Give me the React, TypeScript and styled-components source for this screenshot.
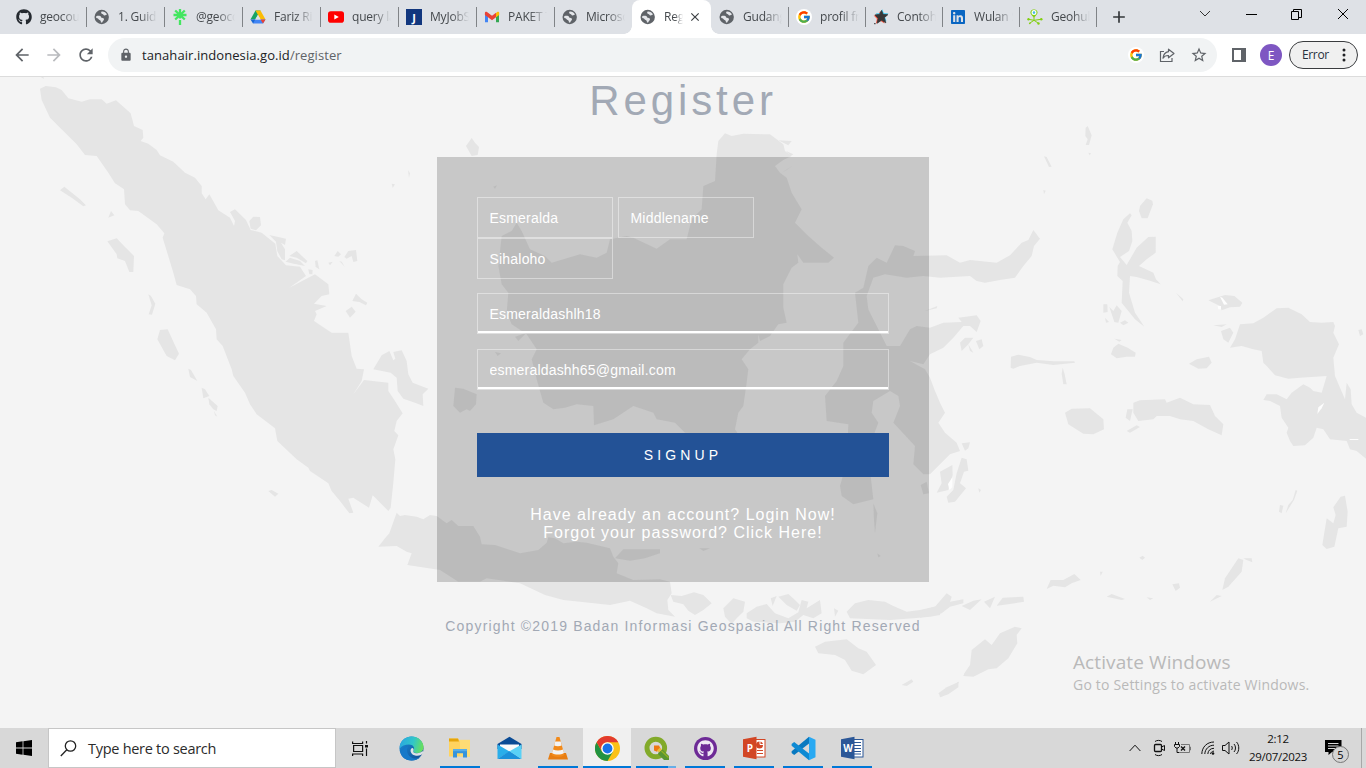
import React from 'react';
import styled, { createGlobalStyle } from 'styled-components';
import { FaGithub, FaLinkedin } from 'react-icons/fa';
import { FcGoogle } from 'react-icons/fc';
import { MdLock, MdArrowBack, MdArrowForward, MdRefresh, MdStarBorder, MdClose, MdAdd } from 'react-icons/md';

const UI = `"Open Sans", "Noto Sans", sans-serif`;
const ARIAL = `"Liberation Sans", Arial, sans-serif`;

const Global = createGlobalStyle`
  * { box-sizing: border-box; }
  html, body { margin: 0; height: 100%; overflow: hidden; }
  svg { display: block; flex: none; }
`;

const Screen = styled.div`
  display: flex;
  flex-direction: column;
  width: 1366px;
  height: 768px;
  overflow: hidden;
  font-family: ${UI};
`;

/* ---------- browser chrome ---------- */

const TabStrip = styled.div`
  display: flex;
  height: 34px;
  padding-left: 8px;
  background: #dee1e6;
`;

const TabBox = styled.div<{ $w: number; $active?: boolean; $divider?: boolean }>`
  position: relative;
  display: flex;
  align-items: center;
  gap: 8px;
  width: ${p => p.$w}px;
  height: 34px;
  padding-left: 8px;
  border-radius: 8px 8px 0 0;
  background: ${p => (p.$active ? '#fff' : 'transparent')};
  &::after {
    content: '';
    position: absolute;
    display: ${p => (p.$divider ? 'block' : 'none')};
    right: -1px;
    top: 7px;
    width: 1px;
    height: 20px;
    background: #808387;
  }
`;

const TabCurve = styled.span<{ $side: 'left' | 'right' }>`
  position: absolute;
  bottom: 0;
  ${p => p.$side}: -8px;
  width: 8px;
  height: 8px;
  background: radial-gradient(circle at ${p => (p.$side === 'left' ? '0 0' : '8px 0')}, transparent 7.5px, #fff 8px);
`;

const TabTitle = styled.span<{ $w: number }>`
  width: ${p => p.$w}px;
  overflow: hidden;
  white-space: nowrap;
  font-size: 12px;
  letter-spacing: -0.2px;
  line-height: 18px;
  color: #45494d;
  mask-image: linear-gradient(to right, #000 55%, transparent 100%);
`;

const TabClose = styled(MdClose)`
  margin-left: -3px;
  color: #3c4043;
`;

const NewTab = styled.div`
  display: flex;
  align-items: center;
  width: 74px;
  padding-left: 13px;
  color: #33373a;
`;

const WindowButtons = styled.div`
  display: flex;
  align-items: center;
  justify-content: space-between;
  width: 150px;
  height: 28px;
  margin-left: 29px;
`;

const Toolbar = styled.div`
  display: flex;
  align-items: center;
  height: 43px;
  padding: 0 8px 0 12px;
  background: #fff;
  border-bottom: 1px solid #dcdcdc;
`;

const NavButtons = styled.div`
  display: flex;
  gap: 12px;
  width: 96px;
  color: #5f6368;
`;

const Omnibox = styled.div`
  display: flex;
  align-items: center;
  width: 1109px;
  height: 34px;
  padding: 0 9px 0 11px;
  border-radius: 17px;
  background: #f1f3f4;
  color: #5f6368;
`;

const Url = styled.span`
  flex: 1;
  margin-left: 9px;
  font-size: 13px;
  letter-spacing: 0.07px;
  line-height: 20px;
  b { font-weight: 400; color: #202124; }
`;

const OmniIcons = styled.div`
  display: flex;
  align-items: center;
  gap: 14px;
`;

const SidePanelIcon = styled.svg`
  margin-left: 15px;
`;

const GoogleDisc = styled.span<{ $s: number }>`
  display: flex;
  align-items: center;
  justify-content: center;
  width: ${p => p.$s}px;
  height: ${p => p.$s}px;
  border-radius: 50%;
  background: #fff;
`;

const Avatar = styled.div`
  display: flex;
  align-items: center;
  justify-content: center;
  width: 22px;
  height: 22px;
  margin: 0 7px 0 14px;
  border-radius: 50%;
  background: #7e57c2;
  color: #fff;
  font-size: 12px;
`;

const ErrorPill = styled.div`
  display: flex;
  align-items: center;
  justify-content: space-between;
  width: 69px;
  height: 28px;
  padding: 0 11px 1px 12px;
  border: 1px solid #3a3c3f;
  border-radius: 14px;
  background: #f0f0f0;
  color: #27313d;
  font-size: 12px;
  letter-spacing: -0.35px;
`;

/* ---------- page ---------- */

const Page = styled.main`
  position: relative;
  display: flex;
  flex-direction: column;
  align-items: center;
  height: 651px;
  background: #f4f4f4;
  font-family: ${ARIAL};
  overflow: hidden;
`;

const MapLayer = styled.svg`
  position: absolute;
  inset: 0;
`;

const Heading = styled.h1`
  position: relative;
  margin: 0;
  height: 80px;
  font-size: 42px;
  font-weight: 400;
  line-height: 48px;
  letter-spacing: 3.9px;
  color: #a2a9b5;
`;

const Panel = styled.form`
  position: relative;
  width: 492px;
  height: 425px;
  padding: 40px;
  background: rgba(0, 0, 0, 0.18);
`;

const NameFields = styled.div`
  display: flex;
  flex-wrap: wrap;
  column-gap: 5px;
  width: 290px;
  margin-bottom: 14px;
`;

const Field = styled.input<{ $w: number; $underline?: boolean }>`
  display: block;
  width: ${p => p.$w}px;
  height: 41px;
  margin: 0 0 ${p => (p.$underline ? 15 : 0)}px;
  padding: 0 11.5px;
  border: 1px solid rgba(255, 255, 255, 0.42);
  border-radius: 0;
  outline: 0;
  background: transparent;
  box-shadow: ${p => (p.$underline ? 'inset 0 -2px 0 #fff' : 'none')};
  color: #fff;
  font: 14px ${ARIAL};
  letter-spacing: 0.2px;
`;

const SignUp = styled.button`
  display: block;
  width: 412px;
  height: 44px;
  margin: 43px 0 29px;
  padding: 0;
  border: 0;
  background: #235296;
  color: #fff;
  font: 14px ${ARIAL};
  letter-spacing: 4.1px;
`;

const Links = styled.p`
  margin: 0;
  text-align: center;
  font-size: 16px;
  line-height: 18px;
  letter-spacing: 1px;
  color: #fff;
`;

const Footer = styled.p`
  position: relative;
  margin: 36px 0 0;
  font-size: 14px;
  line-height: 16px;
  letter-spacing: 1.17px;
  color: #a2a9b5;
`;

const Watermark = styled.div`
  position: absolute;
  left: 1073px;
  top: 573px;
  font-family: ${UI};
  color: #b9b9b9;
  white-space: nowrap;
`;
const WatermarkTitle = styled.div`
  font-size: 19px;
  line-height: 25px;
  letter-spacing: 0.1px;
`;
const WatermarkText = styled.div`
  font-size: 14px;
  line-height: 20px;
  letter-spacing: 0.2px;
`;

/* ---------- taskbar ---------- */

const TaskBar = styled.footer`
  display: flex;
  align-items: center;
  height: 40px;
  background: #d8d8d8;
`;

const StartButton = styled.div`
  display: flex;
  justify-content: center;
  width: 48px;
`;

const SearchBox = styled.div`
  display: flex;
  align-items: center;
  gap: 11px;
  width: 288px;
  height: 40px;
  padding-left: 11px;
  border: 1px solid #c6c6c6;
  background: #fff;
  font-size: 14.5px;
  letter-spacing: -0.28px;
  color: #2b2b2b;
`;

const TaskItems = styled.div`
  display: flex;
  gap: 1px;
  flex: 1;
`;

const TaskItem = styled.div<{ $running?: boolean; $active?: boolean }>`
  position: relative;
  display: flex;
  align-items: center;
  justify-content: center;
  width: 48px;
  height: 40px;
  background: ${p => (p.$active ? '#f0f0f0' : 'transparent')};
  &:first-child { margin-right: 2px; }
  &::after {
    content: '';
    position: absolute;
    display: ${p => (p.$running ? 'block' : 'none')};
    bottom: 0;
    left: ${p => (p.$active ? 0 : 4)}px;
    right: ${p => (p.$active ? 0 : 4)}px;
    height: 2px;
    background: #0078d7;
  }
`;

const StackMark = styled.span`
  position: absolute;
  z-index: 1;
  right: 4px;
  bottom: 0;
  width: 8px;
  height: 2px;
  background: #66aee7;
`;

const Tray = styled.div`
  display: flex;
  align-items: center;
`;

const TrayIcon = styled.svg.attrs({ fill: 'none', stroke: '#111' })<{ $gap: number }>`
  margin-right: ${p => p.$gap}px;
`;

const Clock = styled.div`
  width: 72px;
  text-align: center;
  font-size: 11.5px;
  letter-spacing: -0.3px;
  line-height: 18px;
  color: #111;
  white-space: nowrap;
`;

const Notice = styled.div`
  position: relative;
  width: 48px;
  height: 40px;
  padding: 12px 0 0 11px;
  border-right: 1px solid #a8a8a8;
  margin-right: 4px;
`;

const NoticeCount = styled.span`
  position: absolute;
  left: 18px;
  top: 18px;
  display: flex;
  align-items: center;
  justify-content: center;
  width: 17px;
  height: 17px;
  border: 1px solid #777;
  border-radius: 50%;
  background: #d4d4d4;
  font-size: 11px;
  color: #000;
`;

/* ---------- icons ---------- */

const Globe = () => (
  <svg width="16" height="16" viewBox="0 0 16 16">
    <circle cx="7.700" cy="8" r="7.200" fill="#5f6368" />
    <path d="M2.200 7.300C4 6.600 6.600 6.700 7 8c.4 1.300 3 .6 3 2.200 0 1.200-1.400 1.400-1.800 3.300l-1.300.1c0-1.300 0-2-1.300-2.500C4.300 10.600 4.300 9 2.200 9z" fill="#e4e6ea" />
    <path d="M7.600 2.600c1.900-.4 4.400.7 5.400 3-1 0-1.200 1-2.500.9-1.300-.2-.9-1.200-2.200-1.500-1.300-.3-1.500-1.400-.7-2.400z" fill="#e4e6ea" />
  </svg>
);

const Linktree = () => (
  <svg width="16" height="16" viewBox="0 0 16 16" stroke="#43e660" strokeWidth="2.300" fill="none">
    <path d="M8 0v9.500M8 11v5M1.500 6h13M3.200 1.500l9.600 9M12.800 1.500l-9.600 9" />
  </svg>
);

const Drive = () => (
  <svg width="16" height="16" viewBox="0 0 16 16">
    <path d="M5.500 1.500h5L5.300 10.300.5 10.500z" fill="#19a463" />
    <path d="M5.500 1.500h5l5 9h-5z" fill="#fbbc04" />
    <path d="M3.200 10.500h12.300L13 14.600H3z" fill="#4285f4" />
    <path d="M.5 10.500h4.700L3 14.600z" fill="#1967d2" />
    <path d="M10.500 10.500h5L13 14.600z" fill="#ea4335" />
    <path d="M8 6l2.600 4.500H5.400z" fill="#dee1e6" />
  </svg>
);

const YouTube = () => (
  <svg width="16" height="16" viewBox="0 0 16 16">
    <rect y="2.300" width="16" height="11.400" rx="2.800" fill="#f00" />
    <path d="M6.300 5.400L10.800 8l-4.500 2.600z" fill="#fff" />
  </svg>
);

const JBadge = styled.span`
  display: flex;
  align-items: center;
  justify-content: center;
  width: 16px;
  height: 16px;
  background: #12377e;
  color: #fff;
  font: bold 11px ${UI};
`;

const Gmail = () => (
  <svg width="16" height="16" viewBox="0 0 16 16">
    <path d="M1 4v9.300h3V7.500z" fill="#4285f4" />
    <path d="M15 4v9.300h-3V7.500z" fill="#34a853" />
    <path d="M12 4l1.200-1c1-.7 2 0 2 1v2L12 8.300z" fill="#fbbc04" />
    <path d="M.9 4c0-1.400 1.300-1.700 2.100-1L8 6.700l4-3v4.600l-4 3-4-3L.9 6z" fill="#ea4335" />
  </svg>
);

const StarOutline = 'M8.500 1.500l1.600 4 4.700.2-3.600 3 1.600 5.100-4.200-2.600-4.400 3 1-5L2 5.900l4.500-.4z';

const Spark = () => (
  <svg width="16" height="16" viewBox="0 0 16 16">
    <path d={StarOutline} fill="#f4513c" transform="translate(-1.300 .6)" />
    <path d={StarOutline} fill="#2bc0ea" transform="translate(.7 -1.300)" />
    <path d={StarOutline} fill="#363636" stroke="#363636" strokeWidth=".8" />
    <path d="M1.200 14h1.300v1.200H1.200z" fill="#333" />
  </svg>
);

const GeoPin = () => (
  <svg width="16" height="16" viewBox="0 0 16 16" stroke="#83cf12" fill="none">
    <path d="M7 8.500C3.600 5.500 3 4 3.600 2.500c1-2.600 5.700-2.600 6.700 0C11 4 10.300 5.500 7 8.500z" fill="#83cf12" stroke="none" />
    <circle cx="7" cy="3.600" r="1.900" fill="#41b9e8" stroke="#fff" strokeWidth="1.200" />
    <path d="M7 8v3M1.500 10.300l5.500 1 7-1M7 11.300l-4.500 3M7 11.300l4.500 3" strokeWidth="1" />
    <g fill="#83cf12" stroke="none"><circle cx="1.500" cy="10.300" r="1.200" /><circle cx="14.300" cy="10.300" r="1.200" /><circle cx="11.500" cy="14.500" r="1.200" /><circle cx="2.800" cy="14.300" r=".9" /></g>
  </svg>
);

const Share = () => (
  <svg width="18" height="18" viewBox="0 0 18 18" fill="none" stroke="#5f6368" strokeWidth="1.200">
    <path d="M6 5.500H2.500v10H14V12" />
    <path d="M10.500 3.200L16 7.500l-5.500 4.300V9.500C8 9.400 6.200 10.300 5 12.200c.3-3.500 2.200-5.900 5.500-6.500z" strokeLinejoin="round" />
  </svg>
);

const Edge = () => (
  <svg width="25" height="25" viewBox="0 0 25 25">
    <defs>
      <linearGradient id="edgeTop" x1="0" y1=".3" x2="1" y2=".5"><stop stopColor="#2aa8e0" /><stop offset=".55" stopColor="#31c6c9" /><stop offset="1" stopColor="#69e05a" /></linearGradient>
      <linearGradient id="edgeLow" x1="0" y1="0" x2="1" y2="1"><stop stopColor="#1a8fdc" /><stop offset="1" stopColor="#114a8f" /></linearGradient>
    </defs>
    <circle cx="12.500" cy="12.500" r="12" fill="url(#edgeLow)" />
    <path d="M.8 10C2 4 7 .5 12.500.5c7 0 12 5 12 10.500 0 4-3 6-6.500 6-3 0-4.500-1-3.500-2.500 1.800-3-.5-6-4.500-6-4 0-7.500 1.500-9.200 4z" fill="url(#edgeTop)" />
    <path d="M9 10.500c-3 5 1 12 8 12 1.700 0 3.300-.7 4.500-1.800C17 27 2.500 25.500 1.500 16c2-3 5-5 7.500-5.500z" fill="#1679c9" />
    <path d="M14.500 14.500c-1 1.500.5 2.700 3.500 2.700 2.300 0 4.300-.8 5.300-2.200l1.400 1.500c-1.700 2.400-4.900 3.700-7.700 3.200-5-.6-6.200-4.700-5-6.700 1-1.700 3.200-1 2.500 1.500z" fill="#dde1e4" />
  </svg>
);

const Explorer = () => (
  <svg width="24" height="22" viewBox="0 0 24 22">
    <path d="M1 1.500h9l2 2.500H22v15.500H1z" fill="#ffd35e" />
    <path d="M1 1.500h9l1 3H1z" fill="#e5a50c" />
    <path d="M12 2.800h10V19.500H12z" fill="#ffdc75" />
    <path d="M5 12h14v8.500h-4v-4.200H9v4.200H5z" fill="#3794db" />
    <path d="M5 12h14v2.200H5z" fill="#58aee8" />
  </svg>
);

const Mail = () => (
  <svg width="25" height="24" viewBox="0 0 25 24">
    <path d="M.5 8L12.500.8 24.500 8v5H.5z" fill="#0a4b95" />
    <path d="M3 8.500h19V16H3z" fill="#fafafa" />
    <path d="M.5 8.500l12 7L.5 23z" fill="#2aaeea" />
    <path d="M.5 23L12.500 15l12 8z" fill="#1c91da" />
    <path d="M24.500 8.500V23L12.500 15.300z" fill="#59d1f6" />
  </svg>
);

const Vlc = () => (
  <svg width="22" height="24" viewBox="0 0 22 24">
    <path d="M3 17h16l2 6.500H1z" fill="#e77d12" />
    <path d="M9.500 1h3l5 18c-3 2.500-10 2.500-13 0z" fill="#f28a1a" />
    <path d="M8.200 5.500h5.500l1 4c-2 1-5.500 1-7.500 0zM6 13.500c3 1.200 7 1.200 10 0l1 3.500c-3 2-9 2-12 0z" fill="#f3f3f3" />
  </svg>
);

const Chrome = () => (
  <svg width="25" height="25" viewBox="0 0 24 24">
    <circle cx="12" cy="12" r="12" fill="#fbc116" />
    <path d="M12 12L6.800 15 1.600 6A12 12 0 0 0 12 24l5.200-9z" fill="#229342" />
    <path d="M1.600 6A12 12 0 0 1 22.400 6H12a6 6 0 0 0-5.200 9z" fill="#e33b2e" />
    <circle cx="12" cy="12" r="6" fill="#fff" />
    <circle cx="12" cy="12" r="4.700" fill="#1a73e8" />
  </svg>
);

const Qgis = () => (
  <svg width="25" height="25" viewBox="0 0 25 25">
    <circle cx="11.800" cy="12" r="8.800" fill="none" stroke="#82aa2a" strokeWidth="5" />
    <path d="M15 15.500l3.500-2L25 20v4h-5l-6-6z" fill="#589632" />
    <path d="M17.500 15l7 6.500" stroke="#93b023" strokeWidth="1.500" />
    <path d="M10 9.500h5l1.500 3-3.500 3.300-3-1.300z" fill="#ee7913" />
    <path d="M13 14.500l3-3 2 2-3 3z" fill="#e9bd3c" />
  </svg>
);

const OctoDisc = styled.span`
  display: flex;
  align-items: center;
  justify-content: center;
  width: 23px;
  height: 23px;
  border-radius: 50%;
  background: #6d2a96;
  color: #efe8f4;
`;

const DocMark = styled.span`
  position: absolute;
  left: 14px;
  top: 13px;
  width: 12px;
  color: #fff;
  text-align: center;
  font: bold 10px/14px ${UI};
`;

const OfficeIcon = ({ color, letter }: { color: string; letter: string }) => (
  <>
    <svg width="24" height="24" viewBox="0 0 24 24">
      <rect x="12" y="3.500" width="11" height="17.500" fill="#fff" stroke={color} />
      {letter === 'W' ? (
        <path d="M14 6.500h7M14 9.500h7M14 12.500h7M14 15.500h7M14 18h7" stroke={color} />
      ) : (
        <>
          <circle cx="17.500" cy="9" r="3.500" fill={color} />
          <path d="M18 5v3.500h3.500" stroke="#fff" fill="none" />
          <path d="M15 14.500h6M15 17.500h6" stroke={color} />
        </>
      )}
      <path d="M1 3.300L14.500.7v22.600L1 20.700z" fill={color} />
    </svg>
    <DocMark>{letter}</DocMark>
  </>
);

const VsCode = () => (
  <svg width="25" height="25" viewBox="0 0 25 25">
    <path d="M18 .8v6.700L3.200 19 .6 17v-1.800z" fill="#0879c0" />
    <path d="M18 24.300v-6.700L3.200 6.100.6 8v1.800z" fill="#0e8ad3" />
    <path d="M18 .8l6.500 3v17.500L18 24.300z" fill="#29a9f2" />
  </svg>
);

const NoticeGlyph = () => (
  <svg width="17" height="16" viewBox="0 0 17 16">
    <path d="M0 0h16.500v12H7l-3.500 3v-3H0z" fill="#000" />
    <path d="M3 3.500h10.500M3 6h10.500M3 8.500h7" stroke="#d8d8d8" />
  </svg>
);

/* ---------- archipelago background ---------- */

interface Region { x: number; y: number; land: string[] }

// Island outlines, grouped by region; each region is drawn on a 3-unit-per-pixel grid.
const regions: Region[] = [
  {
    x: 0, y: 76,
    land: [
      '120,38 137,30 168,34 185,42 205,67 245,77 270,70 305,70 320,83 348,73 392,112 402,150 428,162 430,185 422,195 445,203 470,222 480,238 520,257 555,290 585,305 605,330 605,352 617,370 628,355 655,403 690,425 702,450 705,435 690,408 705,400 738,432 752,462 785,470 826,503 832,540 858,568 900,572 918,600 868,635 945,595 985,625 988,655 965,660 942,683 980,690 945,705 950,715 942,735 995,770 1045,770 1055,840 1070,878 1092,880 1085,915 1060,955 1092,912 1165,920 1165,945 1185,975 1208,1012 1190,1035 1183,1065 1195,1078 1180,1120 1186,1150 1180,1220 1172,1295 1165,1305 1118,1258 1107,1295 1060,1265 1045,1268 1060,1310 1048,1312 1020,1275 995,1245 985,1222 930,1185 925,1175 890,1150 832,1095 825,1057 770,1015 750,985 735,950 700,900 695,880 668,810 650,790 648,760 620,710 590,685 588,660 570,640 530,627 520,590 488,485 493,472 470,445 415,405 390,403 375,385 372,340 345,322 325,290 290,240 255,237 230,205 150,125 125,72',
      '180,343 193,332 240,370 258,388 250,391 215,365',
      '322,496 350,487 370,508 402,540 400,588 388,588 375,555 352,547 350,535',
      '445,655 453,660 466,683 456,716 446,715 455,688',
      '480,762 503,760 525,808 537,833 525,853 500,840 472,790',
      '565,878 573,882 592,915 570,903', '605,935 615,940 628,960 610,967', '625,965 653,990 650,1005 640,1000 628,985',
      '642,1005 652,1022 645,1018', '805,1245 815,1242 835,1253 825,1262',
      '748,435 760,422 780,423 783,448 768,463 752,458',
      '808,477 858,488 855,507 843,500 855,520 855,553 845,550 832,525 828,497',
      '868,540 890,525 922,555 918,562 890,545', '857,557 870,545 900,555 915,570 875,562', '925,580 938,582 937,595 928,595', '945,555 952,553 958,580 947,573',
      '1003,540 1013,525 1023,535 1015,542', '1033,543 1045,525 1068,522 1072,555 1060,558 1055,540 1040,548', '1018,555 1025,557 1034,572', '985,560 998,557 990,568',
      '1057,675 1068,653 1085,670 1102,680 1098,688 1078,678', '1037,705 1055,692 1067,707 1050,725', '1050,640 1060,648', '1175,323 1185,325 1178,336', '1224,282 1230,292 1227,305',
      '1120,880 1145,838 1168,825 1180,853 1186,848 1180,828 1205,823 1220,855 1225,895 1238,920 1285,938 1268,955 1270,990 1245,980 1210,968 1193,945 1190,905 1172,890',
      '122,3 130,2 132,9', '325,425 333,405 343,418',
    ],
  },
  {
    x: 430, y: 400,
    land: [
      '-100,338 -90,348 -75,345 -40,350 -20,358 0,345 20,348 50,370 65,360 85,378 130,378 150,410 155,433 195,435 270,460 325,450 350,428 355,412 375,415 400,430 440,425 470,428 540,445 550,470 565,490 560,520 610,540 690,538 720,545 725,580 712,600 715,630 735,650 680,640 650,625 600,602 540,615 450,605 400,600 345,585 270,550 170,535 150,545 85,545 30,510 -68,495 -55,460 -70,455 -100,438 -155,440 -135,415 -122,400',
      '580,448 690,448 690,460 645,475 600,482 555,475',
      '722,585 755,588 792,577 820,585 845,610 820,630 795,645 775,632 760,613 730,605',
      '880,625 910,595 945,605 940,635 920,655 905,672 885,650',
      '950,640 980,620 1010,612 1035,640 1075,655 1105,637 1115,600 1135,605 1130,625 1170,600 1175,640 1150,655 1120,645 1095,665 1050,670 970,665 950,655',
      '1045,590 1075,582 1095,600 1110,615 1100,632 1070,615', '1022,595 1040,588 1028,618',
      '1212,625 1225,632 1215,650', '1250,635 1275,610 1315,600 1365,605 1390,618 1430,635 1470,630 1535,615 1530,645 1500,650 1450,655 1380,660 1260,655',
      '1155,740 1185,725 1250,718 1285,745 1310,755 1338,795 1300,823 1265,812 1245,780 1215,765 1165,760',
      '1415,855 1445,838 1450,845 1430,858', '1525,880 1550,862 1587,845 1580,860 1535,890',
      '808,445 840,445 820,453', '1342,460 1352,468 1345,472', '1330,310 1342,340 1335,400 1332,360', '1472,255 1490,245 1497,280 1480,283',
    ],
  },
  {
    x: 430, y: 76,
    land: [
      '860,235 865,195 885,172 905,180 940,173 1020,175 1060,205 1065,225 1085,240 1060,252 1035,270 1050,290 1070,305 1085,350 1115,400 1095,440 1135,480 1175,515 1212,545 1195,560 1120,560 1102,535 1105,560 1085,575 1060,625 1060,695 1070,740 1045,745 1020,780 990,795 985,775 985,800 960,820 935,850 955,880 950,920 940,990 925,1010 915,1060 935,1090 885,1100 850,1075 765,1070 735,1040 730,1025 735,1040 680,1030 670,1010 610,990 550,1030 492,1048 490,990 440,985 405,995 370,1000 340,980 320,910 305,850 320,820 290,775 245,745 230,710 235,650 215,625 205,570 215,480 245,465 260,440 275,465 300,520 345,540 365,560 450,535 500,545 530,530 540,490 590,480 610,485 680,518 720,490 770,490 785,430 815,400 820,330 855,315',
      '108,210 125,186 135,200 147,213 143,237 125,240', '1045,193 1085,195 1075,208', '1068,225 1090,235 1082,240', '1055,290 1070,282 1090,268', '190,332 201,328 195,338', '255,782 290,770 265,795', '195,828 213,832 203,840',
      '75,935 100,938 140,955 138,985 120,1005 110,1000 90,1010 70,990', '1395,508 1420,510 1455,525 1450,540 1550,538 1590,560 1620,552 1700,560 1740,538 1775,500 1795,492 1810,462 1830,488 1812,510 1805,540 1780,570 1755,605 1710,612 1665,620 1640,615 1620,600 1530,605 1480,600 1430,605 1365,595 1330,605 1310,660 1315,700 1340,750 1370,810 1410,810 1440,760 1460,750 1500,755 1540,740 1595,738 1585,725 1640,718 1652,735 1640,768 1620,750 1600,750 1570,785 1540,815 1500,835 1480,865 1440,855 1485,880 1500,905 1515,945 1530,980 1545,1010 1525,1040 1545,1070 1580,1100 1590,1125 1560,1135 1530,1165 1500,1195 1480,1195 1450,1165 1455,1110 1390,1040 1410,990 1405,960 1380,945 1330,975 1325,1010 1345,1040 1330,1080 1325,1140 1322,1200 1330,1270 1270,1285 1235,1260 1230,1230 1250,1160 1255,1045 1190,1035 1185,960 1220,915 1240,870 1240,800 1285,740 1275,650 1300,635 1315,570 1340,545 1370,560',
      '1590,800 1605,785 1630,785 1615,805 1595,825', '1638,795 1655,790 1660,810 1648,820', '1615,805 1630,830 1620,825',
      '1485,705 1522,690 1520,697',
    ],
  },
  {
    x: 920, y: 76,
    land: [
      '497,155 503,150 515,178 507,207 497,207 503,190 496,180', '372,241 380,243 395,272 387,273', '370,342 377,344 372,355', '505,230 513,232 509,238',
      '660,390 680,367 697,374 699,385 683,427 665,427 657,405', '630,412 635,418 622,440 635,465 637,495 627,525 600,543 620,567 650,515 685,483 707,482 707,530 680,550 657,570 700,590 708,610 722,625 690,614 650,603 630,600 627,650 645,710 673,752 645,730 605,680 608,615 592,600 593,570 600,558 577,520 592,470 610,430',
      '550,685 562,685 563,708 550,710', '568,693 580,705 590,688 605,705 595,740 583,738 577,720', '600,740 615,733 625,740 610,748', '555,725 567,738 558,740',
      '573,835 580,815 595,803 623,815 647,830 645,842 620,842 590,847', '272,875 273,842 295,836 330,843 350,852 400,856 463,856 465,860 400,867 350,860 300,870 280,878', '428,875 434,895 440,925 430,925 425,893',
      '807,863 830,850 867,842 875,860 860,877 835,878', '865,673 915,657 943,660 967,680 960,692 930,694 905,703 900,690 880,680', '768,650 790,670 788,676', '880,748 920,745 905,753',
      '903,765 930,755 940,770 925,800 910,790', '960,745 1000,742 1030,725 1070,697 1105,695 1145,715 1170,738 1205,740 1240,738 1245,750 1240,770 1257,805 1240,845 1245,900 1260,935 1275,970 1280,920 1292,940 1295,985 1310,1010 1338,1025 1338,1148 1310,1125 1290,1120 1280,1095 1230,1090 1210,1060 1190,1055 1180,1085 1155,1108 1120,1110 1110,1095 1100,1070 1105,1055 1085,1025 1080,990 1050,975 1030,972 1040,955 1070,955 1100,970 1115,950 1150,925 1170,935 1180,945 1205,950 1220,900 1140,905 1105,908 1065,898 1040,870 1030,860 1025,825 1000,820 965,810 930,815 945,790',
      '1315,762 1325,760 1330,775 1320,780', '583,788 605,792 598,797',
      '640,980 660,973 735,970 740,980 780,965 820,985 870,987 885,1020 910,1045 905,1078 865,1060 820,1035 780,1030 750,1020 710,1020 700,1030 655,1035 640,1010',
      '435,1010 455,998 510,997 550,1030 552,1060 520,1075 490,1073 445,1045', '620,1065 650,1048 660,1053 630,1070', '622,1000 638,1000 630,1035 617,1025',
    ],
  },
  {
    x: 920, y: 400,
    land: [
      '60,215 97,195 98,225 85,270 50,278 65,250', '125,173 140,178 145,212 132,215 120,250 138,265 105,305 85,308 80,290 100,270 110,220', '125,130 150,127 145,145 135,152',
      '380,567 392,540 430,540 463,522 482,540 455,550 435,562 400,557', '560,590 575,582 615,597 605,600', '757,553 777,550 780,563 767,573', '680,592 700,595 690,600',
      '955,475 970,480 965,515 925,560 907,570 915,535 935,505', '970,475 995,475 997,487 980,480', '870,605 890,585 905,588',
      '1127,270 1132,272 1122,300 1097,340 1105,315 1118,300', '1080,315 1090,317 1085,340 1077,335', '1240,322 1262,290 1275,287 1283,335 1280,380 1255,385 1243,440 1220,447 1207,435 1220,355 1240,370 1247,345',
      '0,632 45,620 80,580 95,590 90,605 130,598 130,610 90,620 65,640 0,653', '125,618 160,602 185,598 150,630', '192,605 225,590 210,625', '230,617 248,593 310,590 312,605 270,612',
      '133,820 150,795 155,750 195,718 215,735 240,700 285,680 305,685 290,705 292,730 265,775 230,805 205,808 160,830 130,828', '57,880 85,868 115,845 115,862 85,883 60,892',
      '658,473 668,467 675,473 667,480', '175,265 183,270 178,278', '540,515 548,515 542,527',
    ],
  },
];

const glints: Region[] = [
  { x: 920, y: 76, land: ['900,662 907,665 923,685 912,686', '893,690 903,690 903,700 895,700'] },
  { x: 920, y: 400, land: ['97,232 97,262 88,270 84,252', '1213,8 1205,25 1192,42 1195,22', '1288,117 1315,117 1315,120 1290,120'] },
];

const Shapes = ({ data, fill }: { data: Region[]; fill: string }) => (
  <>
    {data.map((r, i) => (
      <g key={i} transform={`translate(${r.x} ${r.y}) scale(.33333)`} fill={fill}>
        {r.land.map((pts, k) => <polygon key={k} points={pts} />)}
      </g>
    ))}
  </>
);

/* ---------- data ---------- */

interface TabInfo { title: string; icon: React.ReactNode; w: number; active?: boolean; divider?: boolean }

const tabs: TabInfo[] = [
  { title: 'geocou', icon: <FaGithub size={16} color="#24292f" />, w: 78, divider: true },
  { title: '1. Guide', icon: <Globe />, w: 78, divider: true },
  { title: '@geoco', icon: <Linktree />, w: 78, divider: true },
  { title: 'Fariz Riz', icon: <Drive />, w: 78, divider: true },
  { title: 'query la', icon: <YouTube />, w: 78, divider: true },
  { title: 'MyJobS', icon: <JBadge>J</JBadge>, w: 78, divider: true },
  { title: 'PAKET T', icon: <Gmail />, w: 78, divider: true },
  { title: 'Microso', icon: <Globe />, w: 78 },
  { title: 'Regi', icon: <Globe />, w: 79, active: true },
  { title: 'Gudang', icon: <Globe />, w: 77, divider: true },
  { title: 'profil fr', icon: <GoogleDisc $s={16}><FcGoogle size={14} /></GoogleDisc>, w: 77, divider: true },
  { title: 'Contoh', icon: <Spark />, w: 77, divider: true },
  { title: 'Wulan S', icon: <FaLinkedin size={16} color="#0a66c2" />, w: 77, divider: true },
  { title: 'Geohub', icon: <GeoPin />, w: 77, divider: true },
];

export default function App() {
  return (
    <Screen>
      <Global />
      <TabStrip>
        {tabs.map(t => (
          <TabBox key={t.title} $w={t.w} $active={t.active} $divider={t.divider}>
            {t.active && <><TabCurve $side="left" /><TabCurve $side="right" /></>}
            {t.icon}
            <TabTitle $w={t.active ? 19 : 39}>{t.title}</TabTitle>
            {t.active && <TabClose size={14} />}
          </TabBox>
        ))}
        <NewTab><MdAdd size={20} /></NewTab>
        <WindowButtons>
          <svg width="12" height="8" viewBox="0 0 12 8" fill="none" stroke="#333"><path d="M1 1l5 5 5-5" /></svg>
          <svg width="11" height="11" viewBox="0 0 11 11" stroke="#000"><path d="M0 5.500h11" /></svg>
          <svg width="11" height="11" viewBox="0 0 11 11" fill="none" stroke="#000"><path d="M.5 2.500h7v8h-7zM2.500 2.500v-2h8v8h-3" /></svg>
          <svg width="12" height="12" viewBox="0 0 12 12" stroke="#000"><path d="M1 1l10 10M11 1L1 11" /></svg>
        </WindowButtons>
      </TabStrip>
      <Toolbar>
        <NavButtons>
          <MdArrowBack size={20} />
          <MdArrowForward size={20} color="#b9bbbe" />
          <MdRefresh size={20} />
        </NavButtons>
        <Omnibox>
          <MdLock size={14} />
          <Url><b>tanahair.indonesia.go.id</b>/register</Url>
          <OmniIcons>
            <GoogleDisc $s={16}><FcGoogle size={14} /></GoogleDisc>
            <Share />
            <MdStarBorder size={18} />
          </OmniIcons>
        </Omnibox>
        <SidePanelIcon width="14" height="14" viewBox="0 0 14 14"><path d="M1 1h12v12H1z" fill="#fff" stroke="#5f6368" strokeWidth="2" /><path d="M9 0h5v14H9z" fill="#5f6368" /></SidePanelIcon>
        <Avatar>E</Avatar>
        <ErrorPill>
          Error
          <svg width="4" height="14" viewBox="0 0 4 14" fill="#202124"><circle cx="2" cy="2" r="1.500" /><circle cx="2" cy="7" r="1.500" /><circle cx="2" cy="12" r="1.500" /></svg>
        </ErrorPill>
      </Toolbar>

      <Page>
        <MapLayer width="1366" height="651" viewBox="0 77 1366 651">
          <Shapes data={regions} fill="#e5e5e5" />
          <Shapes data={glints} fill="#fdfdfd" />
        </MapLayer>
        <Heading>Register</Heading>
        <Panel>
          <NameFields>
            <Field $w={136} defaultValue="Esmeralda" />
            <Field $w={136} defaultValue="Middlename" />
            <Field $w={136} defaultValue="Sihaloho" />
          </NameFields>
          <Field $w={412} $underline defaultValue="Esmeraldashlh18" />
          <Field $w={412} $underline defaultValue="esmeraldashh65@gmail.com" />
          <SignUp type="button">SIGNUP</SignUp>
          <Links>
            Have already an account? Login Now!<br />
            Forgot your password? Click Here!
          </Links>
        </Panel>
        <Footer>Copyright ©2019 Badan Informasi Geospasial All Right Reserved</Footer>
        <Watermark>
          <WatermarkTitle>Activate Windows</WatermarkTitle>
          <WatermarkText>Go to Settings to activate Windows.</WatermarkText>
        </Watermark>
      </Page>

      <TaskBar>
        <StartButton>
          <svg width="16" height="16" viewBox="0 0 16 16"><path d="M0 2.300L6.600 1.300v6.300H0zM7.400 1.200L16 0v7.600H7.400zM0 8.400h6.600v6.300L0 13.700zM7.400 8.400H16V16l-8.600-1.200z" /></svg>
        </StartButton>
        <SearchBox>
          <svg width="17" height="17" viewBox="0 0 17 17" fill="none" stroke="#222" strokeWidth="1.300"><circle cx="10.500" cy="6" r="5.200" /><path d="M6.800 9.800L.8 16" /></svg>
          Type here to search
        </SearchBox>
        <TaskItems>
          <TaskItem>
            <svg width="17" height="17" viewBox="0 0 17 17" fill="none" stroke="#111" strokeWidth="1.200"><path d="M.6 1.500V3.500h10V1.500M1.600 5.500h9v6h-9zM.6 16v-2h10v2M14.500 1v2.500M14.500 8.500V16" /><path d="M13 5h3v2.500h-3z" fill="#111" stroke="none" /></svg>
          </TaskItem>
          <TaskItem><Edge /></TaskItem>
          <TaskItem $running><Explorer /></TaskItem>
          <TaskItem><Mail /></TaskItem>
          <TaskItem $running><Vlc /></TaskItem>
          <TaskItem $running $active><Chrome /></TaskItem>
          <TaskItem $running><Qgis /><StackMark /></TaskItem>
          <TaskItem $running><OctoDisc><FaGithub size={17} /></OctoDisc></TaskItem>
          <TaskItem $running><OfficeIcon color="#d24625" letter="P" /></TaskItem>
          <TaskItem $running><VsCode /></TaskItem>
          <TaskItem $running><OfficeIcon color="#2b5797" letter="W" /></TaskItem>
        </TaskItems>
        <Tray>
          <TrayIcon $gap={10} width="12" height="8" viewBox="0 0 12 8"><path d="M.6 7L6 1.200 11.400 7" /></TrayIcon>
          <TrayIcon $gap={6} width="17" height="18" viewBox="0 0 17 18"><rect x="3.500" y="5.500" width="7" height="7" rx="1" strokeWidth="1.300" /><path d="M10.500 8l3-1.500v5l-3-1.500M4 2.500c2-1.500 5-1.500 7 0M4 15.500c2 1.500 5 1.500 7 0" /></TrayIcon>
          <TrayIcon $gap={10} width="17" height="14" viewBox="0 0 17 14"><path d="M1.500 1v2.500M4.500 1v2.500M.5 3.500h5v2l-1.500 1.500H2L.5 5.500zM3 7v4.500h2" /><path d="M7 3.500h8.500v8H5M15.500 6h1v3h-1" stroke="#777" /><path d="M7 5.500l4 4M11 5.500l-4 4" strokeWidth="1.300" /></TrayIcon>
          <TrayIcon $gap={7} width="14" height="14" viewBox="0 0 14 14"><path d="M.8 13C1 6 6 1 13 1M3.800 13C4 8 8 4.200 13 4.200M6.800 13C7 9.500 9.500 7.300 13 7.300M9.500 13c.2-1.500 1.500-2.800 3.500-2.900" /><circle cx="12" cy="12.500" r="1.300" fill="#111" stroke="none" /></TrayIcon>
          <TrayIcon $gap={2} width="18" height="14" viewBox="0 0 18 14"><path d="M.5 4.500h2.500L7 1v12L3 9.500H.5zM9.500 5c1 1 1 3 0 4M12 3c2 2 2 6 0 8M14.500 1c3 3 3 9 0 12" /></TrayIcon>
          <Clock>2:12<br />29/07/2023</Clock>
          <Notice>
            <NoticeGlyph />
            <NoticeCount>5</NoticeCount>
          </Notice>
        </Tray>
      </TaskBar>
    </Screen>
  );
}
